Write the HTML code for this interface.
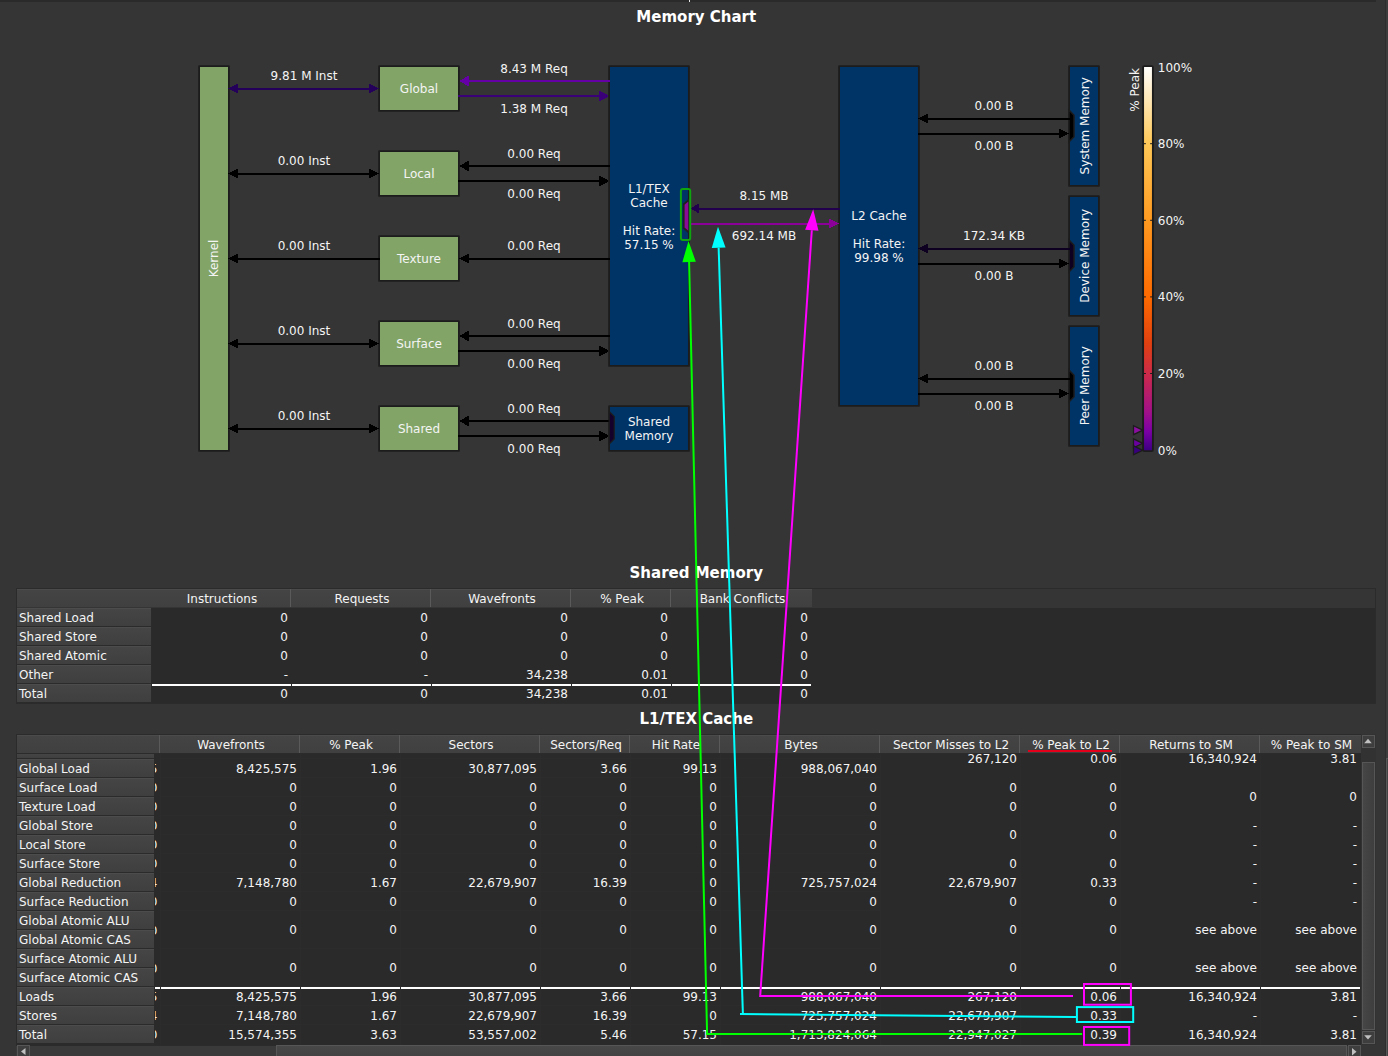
<!DOCTYPE html>
<html><head><meta charset="utf-8"><title>Memory Chart</title><style>
*{box-sizing:border-box;margin:0;padding:0}
html,body{width:1388px;height:1056px;overflow:hidden;background:#353535}
body{position:relative;font-family:"DejaVu Sans","Liberation Sans",sans-serif;font-size:12px;color:#f4f4f4;line-height:14px}
.a{position:absolute}
.t{position:absolute;white-space:nowrap;line-height:14px}
.title{position:absolute;left:0;width:1392.5px;text-align:center;font-weight:bold;font-size:15px;line-height:18px;color:#fff}
svg{position:absolute;left:0;top:0}
svg text{font-family:"DejaVu Sans","Liberation Sans",sans-serif;font-size:12px;fill:#f4f4f4}
.hd{position:absolute;height:18px;padding-left:2px;background:linear-gradient(#444444,#404040);border-top:1px solid #4b4b4b;text-align:center;line-height:16px;padding-top:1px;white-space:nowrap;overflow:hidden}
.hs{position:absolute;width:2px;background:linear-gradient(90deg,#5a5a5a 0,#5a5a5a 50%,#3a3a3a 50%)}
.rh{position:absolute;height:18px;background:linear-gradient(#454545,#3f3f3f);border-top:1px solid #4c4c4c;padding-left:2px;padding-top:1px;line-height:16px;white-space:nowrap;overflow:hidden}
.c{position:absolute;text-align:right;white-space:nowrap;line-height:14px;height:14px}
.body{position:absolute;background:#2a2a2a}
.wl{position:absolute;height:2px;background:#fff}
</style></head><body>
<div class="a" style="left:0;top:0;width:1376px;height:2px;background:#2a2a2a"></div>
<div class="a" style="left:689px;top:0;width:1px;height:2px;background:#e8e8e8"></div>
<div class="a" style="left:1385px;top:0;width:1px;height:1056px;background:#2e2e2e"></div>
<div class="a" style="left:1386px;top:0;width:2px;height:1056px;background:#3c3c3c"></div>
<div class="a" style="left:1386px;top:758px;width:2px;height:298px;background:#434343;border-left:1px solid #585858;border-top:1px solid #585858"></div>
<div class="title" style="top:8px">Memory Chart</div>
<div class="title" style="top:564px">Shared Memory</div>
<div class="title" style="top:710px">L1/TEX Cache</div>
<svg width="1388" height="1056" viewBox="0 0 1388 1056"><rect x="199.10" y="66.10" width="29.80" height="384.80" fill="#82a567" stroke="#1c1c1c" stroke-width="1.8" stroke-linejoin="round"/>
<rect x="379.10" y="66.10" width="79.80" height="44.80" fill="#82a567" stroke="#1c1c1c" stroke-width="1.8" stroke-linejoin="round"/>
<rect x="379.10" y="151.10" width="79.80" height="44.80" fill="#82a567" stroke="#1c1c1c" stroke-width="1.8" stroke-linejoin="round"/>
<rect x="379.10" y="236.10" width="79.80" height="44.80" fill="#82a567" stroke="#1c1c1c" stroke-width="1.8" stroke-linejoin="round"/>
<rect x="379.10" y="321.10" width="79.80" height="44.80" fill="#82a567" stroke="#1c1c1c" stroke-width="1.8" stroke-linejoin="round"/>
<rect x="379.10" y="406.10" width="79.80" height="44.80" fill="#82a567" stroke="#1c1c1c" stroke-width="1.8" stroke-linejoin="round"/>
<rect x="609.10" y="66.10" width="79.80" height="299.80" fill="#003366" stroke="#1c1c1c" stroke-width="1.8" stroke-linejoin="round"/>
<rect x="609.10" y="406.10" width="79.80" height="44.80" fill="#003366" stroke="#1c1c1c" stroke-width="1.8" stroke-linejoin="round"/>
<rect x="839.10" y="66.10" width="79.80" height="339.80" fill="#003366" stroke="#1c1c1c" stroke-width="1.8" stroke-linejoin="round"/>
<rect x="1069.10" y="66.10" width="29.80" height="119.80" fill="#003366" stroke="#1c1c1c" stroke-width="1.8" stroke-linejoin="round"/>
<rect x="1069.10" y="196.10" width="29.80" height="119.80" fill="#003366" stroke="#1c1c1c" stroke-width="1.8" stroke-linejoin="round"/>
<rect x="1069.10" y="326.10" width="29.80" height="119.80" fill="#003366" stroke="#1c1c1c" stroke-width="1.8" stroke-linejoin="round"/>
<g shape-rendering="crispEdges"><line x1="237.20" y1="89" x2="370.20" y2="89" stroke="#24005a" stroke-width="2"/>
<polygon points="228.20,88.5 238.20,83.6 238.20,93.4" fill="#24005a"/>
<polygon points="379.20,88.5 369.20,83.6 369.20,93.4" fill="#24005a"/>
</g>
<text x="304" y="80" text-anchor="middle" >9.81 M Inst</text>
<text x="419" y="93" text-anchor="middle" >Global</text>
<g shape-rendering="crispEdges"><line x1="237.20" y1="174" x2="370.20" y2="174" stroke="#000" stroke-width="2"/>
<polygon points="228.20,173.5 238.20,168.6 238.20,178.4" fill="#000"/>
<polygon points="379.20,173.5 369.20,168.6 369.20,178.4" fill="#000"/>
</g>
<text x="304" y="165" text-anchor="middle" >0.00 Inst</text>
<text x="419" y="178" text-anchor="middle" >Local</text>
<g shape-rendering="crispEdges"><line x1="237.20" y1="259" x2="380.00" y2="259" stroke="#000" stroke-width="2"/>
<polygon points="228.20,258.5 238.20,253.6 238.20,263.4" fill="#000"/>
</g>
<text x="304" y="250" text-anchor="middle" >0.00 Inst</text>
<text x="419" y="263" text-anchor="middle" >Texture</text>
<g shape-rendering="crispEdges"><line x1="237.20" y1="344" x2="370.20" y2="344" stroke="#000" stroke-width="2"/>
<polygon points="228.20,343.5 238.20,338.6 238.20,348.4" fill="#000"/>
<polygon points="379.20,343.5 369.20,338.6 369.20,348.4" fill="#000"/>
</g>
<text x="304" y="335" text-anchor="middle" >0.00 Inst</text>
<text x="419" y="348" text-anchor="middle" >Surface</text>
<g shape-rendering="crispEdges"><line x1="237.20" y1="429" x2="370.20" y2="429" stroke="#000" stroke-width="2"/>
<polygon points="228.20,428.5 238.20,423.6 238.20,433.4" fill="#000"/>
<polygon points="379.20,428.5 369.20,423.6 369.20,433.4" fill="#000"/>
</g>
<text x="304" y="420" text-anchor="middle" >0.00 Inst</text>
<text x="419" y="433" text-anchor="middle" >Shared</text>
<g shape-rendering="crispEdges"><line x1="468.00" y1="81.0" x2="610.00" y2="81.0" stroke="#6400a5" stroke-width="2"/>
<polygon points="459.00,81.0 469.00,75.6 469.00,86.4" fill="#6400a5"/>
</g>
<g shape-rendering="crispEdges"><line x1="458.00" y1="96.0" x2="600.40" y2="96.0" stroke="#3a0078" stroke-width="2"/>
<polygon points="609.40,96.0 599.40,90.6 599.40,101.4" fill="#3a0078"/>
</g>
<text x="534" y="73.0" text-anchor="middle" >8.43 M Req</text>
<text x="534" y="113.0" text-anchor="middle" >1.38 M Req</text>
<g shape-rendering="crispEdges"><line x1="468.00" y1="166.0" x2="610.00" y2="166.0" stroke="#000" stroke-width="2"/>
<polygon points="459.00,166.0 469.00,160.6 469.00,171.4" fill="#000"/>
</g>
<g shape-rendering="crispEdges"><line x1="458.00" y1="181.0" x2="600.40" y2="181.0" stroke="#000" stroke-width="2"/>
<polygon points="609.40,181.0 599.40,175.6 599.40,186.4" fill="#000"/>
</g>
<text x="534" y="158.0" text-anchor="middle" >0.00 Req</text>
<text x="534" y="198.0" text-anchor="middle" >0.00 Req</text>
<g shape-rendering="crispEdges"><line x1="468.00" y1="259.0" x2="610.00" y2="259.0" stroke="#000" stroke-width="2"/>
<polygon points="459.00,258.5 469.00,253.6 469.00,263.4" fill="#000"/>
</g>
<text x="534" y="250.0" text-anchor="middle" >0.00 Req</text>
<g shape-rendering="crispEdges"><line x1="468.00" y1="336.0" x2="610.00" y2="336.0" stroke="#000" stroke-width="2"/>
<polygon points="459.00,336.0 469.00,330.6 469.00,341.4" fill="#000"/>
</g>
<g shape-rendering="crispEdges"><line x1="458.00" y1="351.0" x2="600.40" y2="351.0" stroke="#000" stroke-width="2"/>
<polygon points="609.40,351.0 599.40,345.6 599.40,356.4" fill="#000"/>
</g>
<text x="534" y="328.0" text-anchor="middle" >0.00 Req</text>
<text x="534" y="368.0" text-anchor="middle" >0.00 Req</text>
<g shape-rendering="crispEdges"><line x1="468.00" y1="421.0" x2="610.00" y2="421.0" stroke="#000" stroke-width="2"/>
<polygon points="459.00,421.0 469.00,415.6 469.00,426.4" fill="#000"/>
</g>
<g shape-rendering="crispEdges"><line x1="458.00" y1="436.0" x2="600.40" y2="436.0" stroke="#000" stroke-width="2"/>
<polygon points="609.40,436.0 599.40,430.6 599.40,441.4" fill="#000"/>
</g>
<text x="534" y="413.0" text-anchor="middle" >0.00 Req</text>
<text x="534" y="453.0" text-anchor="middle" >0.00 Req</text>
<g shape-rendering="crispEdges"><line x1="698.00" y1="209" x2="839.50" y2="209" stroke="#22004d" stroke-width="2"/>
<polygon points="690.00,208.5 699.00,203.6 699.00,213.4" fill="#22004d"/>
</g>
<g shape-rendering="crispEdges"><line x1="689.50" y1="224" x2="830.00" y2="224" stroke="#8b0099" stroke-width="2"/>
<polygon points="839.00,223.5 829.00,218.6 829.00,228.4" fill="#8b0099"/>
</g>
<text x="764" y="200" text-anchor="middle" >8.15 MB</text>
<text x="764" y="240" text-anchor="middle" >692.14 MB</text>
<text x="994" y="109.9" text-anchor="middle" >0.00 B</text>
<text x="994" y="149.8" text-anchor="middle" >0.00 B</text>
<polygon points="1069,110.00 1074,115.20 1074,136.80 1069,142.00" fill="#000" stroke="#1c1c1c" stroke-width="1.5"/>
<g shape-rendering="crispEdges"><line x1="927.20" y1="119.0" x2="1070.00" y2="119.0" stroke="#000" stroke-width="2"/>
<polygon points="918.20,118.5 928.20,113.6 928.20,123.4" fill="#000"/>
</g>
<g shape-rendering="crispEdges"><line x1="918.00" y1="134.0" x2="1060.20" y2="134.0" stroke="#000" stroke-width="2"/>
<polygon points="1069.20,133.5 1059.20,128.6 1059.20,138.4" fill="#000"/>
</g>
<text x="994" y="239.9" text-anchor="middle" >172.34 KB</text>
<text x="994" y="279.8" text-anchor="middle" >0.00 B</text>
<polygon points="1069,240.00 1074,245.20 1074,266.80 1069,272.00" fill="#0e0020" stroke="#1c1c1c" stroke-width="1.5"/>
<g shape-rendering="crispEdges"><line x1="927.20" y1="249.0" x2="1070.00" y2="249.0" stroke="#0e0020" stroke-width="2"/>
<polygon points="918.20,248.5 928.20,243.6 928.20,253.4" fill="#0e0020"/>
</g>
<g shape-rendering="crispEdges"><line x1="918.00" y1="264.0" x2="1060.20" y2="264.0" stroke="#000" stroke-width="2"/>
<polygon points="1069.20,263.5 1059.20,258.6 1059.20,268.4" fill="#000"/>
</g>
<text x="994" y="369.9" text-anchor="middle" >0.00 B</text>
<text x="994" y="409.8" text-anchor="middle" >0.00 B</text>
<polygon points="1069,370.00 1074,375.20 1074,396.80 1069,402.00" fill="#000" stroke="#1c1c1c" stroke-width="1.5"/>
<g shape-rendering="crispEdges"><line x1="927.20" y1="379.0" x2="1070.00" y2="379.0" stroke="#000" stroke-width="2"/>
<polygon points="918.20,378.5 928.20,373.6 928.20,383.4" fill="#000"/>
</g>
<g shape-rendering="crispEdges"><line x1="918.00" y1="394.0" x2="1060.20" y2="394.0" stroke="#000" stroke-width="2"/>
<polygon points="1069.20,393.5 1059.20,388.6 1059.20,398.4" fill="#000"/>
</g>
<polygon points="609.2,411.5 614.2,416.5 614.2,439 609.2,444" fill="#14002b" stroke="#1c1c1c" stroke-width="1.2"/>
<polygon points="689.2,199.6 683.7,204.2 683.7,228 689.2,232.8" fill="#8b0a96" stroke="#202020" stroke-width="1.8"/>
<rect x="680.9" y="188.9" width="9.3" height="51" rx="2" ry="2" fill="none" stroke="#0ea50e" stroke-width="2"/>
<text transform="translate(217.8,258.5) rotate(-90)" text-anchor="middle">Kernel</text>
<text x="649" y="193" text-anchor="middle" >L1/TEX</text>
<text x="649" y="207" text-anchor="middle" >Cache</text>
<text x="649" y="235" text-anchor="middle" >Hit Rate:</text>
<text x="649" y="249" text-anchor="middle" >57.15 %</text>
<text x="649" y="426" text-anchor="middle" >Shared</text>
<text x="649" y="440" text-anchor="middle" >Memory</text>
<text x="879" y="220" text-anchor="middle" >L2 Cache</text>
<text x="879" y="248" text-anchor="middle" >Hit Rate:</text>
<text x="879" y="262" text-anchor="middle" >99.98 %</text>
<text transform="translate(1088.8,125.8) rotate(-90)" text-anchor="middle">System Memory</text>
<text transform="translate(1088.8,255.8) rotate(-90)" text-anchor="middle">Device Memory</text>
<text transform="translate(1088.8,385.8) rotate(-90)" text-anchor="middle">Peer Memory</text>
<defs><linearGradient id="cb" x1="0" y1="1" x2="0" y2="0">
<stop offset="0" stop-color="#3a0082"/><stop offset="0.05" stop-color="#7a00a5"/><stop offset="0.1" stop-color="#a0108a"/>
<stop offset="0.2" stop-color="#cc2a4a"/><stop offset="0.28" stop-color="#e04010"/><stop offset="0.4" stop-color="#ff6a00"/>
<stop offset="0.6" stop-color="#ff9a20"/><stop offset="0.8" stop-color="#ffc857"/><stop offset="1" stop-color="#ffffff"/></linearGradient></defs>
<rect x="1143.1" y="66.1" width="9.8" height="385" rx="1.2" fill="url(#cb)" stroke="#1c1c1c" stroke-width="1.9"/>
<text x="1157.8" y="72" text-anchor="start" >100%</text>
<text x="1157.8" y="148" text-anchor="start" >80%</text>
<path d="M1143.9 143.7h2M1152.1 143.7h-2" stroke="#1c1c1c" stroke-width="1"/>
<text x="1157.8" y="225" text-anchor="start" >60%</text>
<path d="M1143.9 220.3h2M1152.1 220.3h-2" stroke="#1c1c1c" stroke-width="1"/>
<text x="1157.8" y="301" text-anchor="start" >40%</text>
<path d="M1143.9 296.9h2M1152.1 296.9h-2" stroke="#1c1c1c" stroke-width="1"/>
<text x="1157.8" y="378" text-anchor="start" >20%</text>
<path d="M1143.9 373.5h2M1152.1 373.5h-2" stroke="#1c1c1c" stroke-width="1"/>
<text x="1157.8" y="455" text-anchor="start" >0%</text>
<text transform="translate(1138.5,89.8) rotate(-90)" text-anchor="middle">% Peak</text>
<polygon points="1142.8,430.2 1133.5,425.7 1133.5,434.7" fill="#8b0f9f" stroke="#1c1c1c" stroke-width="1.3"/>
<polygon points="1142.8,443.3 1133.5,438.8 1133.5,447.8" fill="#6a00a0" stroke="#1c1c1c" stroke-width="1.3"/>
<polygon points="1142.8,450.3 1133.5,445.8 1133.5,454.8" fill="#38007a" stroke="#1c1c1c" stroke-width="1.3"/></svg>
<div class="a" style="left:16px;top:588px;width:1360px;height:116px;background:#2b2b2b"></div>
<div class="a" style="left:17px;top:589px;width:1358px;height:19px;background:#353535"></div>
<div class="body" style="left:152px;top:608px;width:1223px;height:95px"></div>
<div class="hd" style="left:17px;top:589px;width:274px"><span style="padding-left:134px">Instructions</span></div>
<div class="hs" style="left:290px;top:589px;height:18px"></div>
<div class="hd" style="left:291px;top:589px;width:140px">Requests</div>
<div class="hs" style="left:430px;top:589px;height:18px"></div>
<div class="hd" style="left:431px;top:589px;width:140px">Wavefronts</div>
<div class="hs" style="left:570px;top:589px;height:18px"></div>
<div class="hd" style="left:571px;top:589px;width:100px">% Peak</div>
<div class="hs" style="left:670px;top:589px;height:18px"></div>
<div class="hd" style="left:671px;top:589px;width:141px">Bank Conflicts</div>
<div class="rh" style="left:17px;top:608px;width:134px">Shared Load</div>
<div class="c" style="left:152px;top:611px;width:136px">0</div>
<div class="c" style="left:291px;top:611px;width:137px">0</div>
<div class="c" style="left:431px;top:611px;width:137px">0</div>
<div class="c" style="left:571px;top:611px;width:97px">0</div>
<div class="c" style="left:671px;top:611px;width:137px">0</div>
<div class="rh" style="left:17px;top:627px;width:134px">Shared Store</div>
<div class="c" style="left:152px;top:630px;width:136px">0</div>
<div class="c" style="left:291px;top:630px;width:137px">0</div>
<div class="c" style="left:431px;top:630px;width:137px">0</div>
<div class="c" style="left:571px;top:630px;width:97px">0</div>
<div class="c" style="left:671px;top:630px;width:137px">0</div>
<div class="rh" style="left:17px;top:646px;width:134px">Shared Atomic</div>
<div class="c" style="left:152px;top:649px;width:136px">0</div>
<div class="c" style="left:291px;top:649px;width:137px">0</div>
<div class="c" style="left:431px;top:649px;width:137px">0</div>
<div class="c" style="left:571px;top:649px;width:97px">0</div>
<div class="c" style="left:671px;top:649px;width:137px">0</div>
<div class="rh" style="left:17px;top:665px;width:134px">Other</div>
<div class="c" style="left:152px;top:668px;width:136px">-</div>
<div class="c" style="left:291px;top:668px;width:137px">-</div>
<div class="c" style="left:431px;top:668px;width:137px">34,238</div>
<div class="c" style="left:571px;top:668px;width:97px">0.01</div>
<div class="c" style="left:671px;top:668px;width:137px">0</div>
<div class="rh" style="left:17px;top:684px;width:134px">Total</div>
<div class="c" style="left:152px;top:687px;width:136px">0</div>
<div class="c" style="left:291px;top:687px;width:137px">0</div>
<div class="c" style="left:431px;top:687px;width:137px">34,238</div>
<div class="c" style="left:571px;top:687px;width:97px">0.01</div>
<div class="c" style="left:671px;top:687px;width:137px">0</div>
<div class="wl" style="left:152px;top:684px;width:139px"></div>
<div class="wl" style="left:292px;top:684px;width:139px"></div>
<div class="wl" style="left:432px;top:684px;width:139px"></div>
<div class="wl" style="left:572px;top:684px;width:99px"></div>
<div class="wl" style="left:672px;top:684px;width:139px"></div>
<div class="a" style="left:16px;top:734px;width:1360px;height:322px;background:#2b2b2b"></div>
<div class="body" style="left:154px;top:754px;width:1207px;height:291px"></div>
<div class="hd" style="left:17px;top:735px;width:143px"></div>
<div class="hs" style="left:159px;top:735px;height:18px"></div>
<div class="hd" style="left:160px;top:735px;width:140px">Wavefronts</div>
<div class="hs" style="left:299px;top:735px;height:18px"></div>
<div class="hd" style="left:300px;top:735px;width:100px">% Peak</div>
<div class="hs" style="left:399px;top:735px;height:18px"></div>
<div class="hd" style="left:400px;top:735px;width:140px">Sectors</div>
<div class="hs" style="left:539px;top:735px;height:18px"></div>
<div class="hd" style="left:540px;top:735px;width:90px">Sectors/Req</div>
<div class="hs" style="left:629px;top:735px;height:18px"></div>
<div class="hd" style="left:630px;top:735px;width:90px">Hit Rate</div>
<div class="hs" style="left:719px;top:735px;height:18px"></div>
<div class="hd" style="left:720px;top:735px;width:160px">Bytes</div>
<div class="hs" style="left:879px;top:735px;height:18px"></div>
<div class="hd" style="left:880px;top:735px;width:140px">Sector Misses to L2</div>
<div class="hs" style="left:1019px;top:735px;height:18px"></div>
<div class="hd" style="left:1020px;top:735px;width:100px">% Peak to L2</div>
<div class="hs" style="left:1119px;top:735px;height:18px"></div>
<div class="hd" style="left:1120px;top:735px;width:140px">Returns to SM</div>
<div class="hs" style="left:1259px;top:735px;height:18px"></div>
<div class="hd" style="left:1260px;top:735px;width:101px">% Peak to SM</div>
<div class="a" style="left:1028px;top:750px;width:84px;height:2px;background:#e4001a"></div>
<div class="a" style="left:160px;top:754px;width:1px;height:291px;background:#2c2c2c"></div>
<div class="a" style="left:300px;top:754px;width:1px;height:291px;background:#2c2c2c"></div>
<div class="a" style="left:400px;top:754px;width:1px;height:291px;background:#2c2c2c"></div>
<div class="a" style="left:540px;top:754px;width:1px;height:291px;background:#2c2c2c"></div>
<div class="a" style="left:630px;top:754px;width:1px;height:291px;background:#2c2c2c"></div>
<div class="a" style="left:720px;top:754px;width:1px;height:291px;background:#2c2c2c"></div>
<div class="a" style="left:880px;top:754px;width:1px;height:291px;background:#2c2c2c"></div>
<div class="a" style="left:1020px;top:754px;width:1px;height:291px;background:#2c2c2c"></div>
<div class="a" style="left:1120px;top:754px;width:1px;height:291px;background:#2c2c2c"></div>
<div class="a" style="left:1260px;top:754px;width:1px;height:291px;background:#2c2c2c"></div>
<div class="a" style="left:161px;top:758px;width:719px;height:1px;background:#2c2c2c"></div>
<div class="a" style="left:161px;top:777px;width:719px;height:1px;background:#2c2c2c"></div>
<div class="a" style="left:161px;top:796px;width:719px;height:1px;background:#2c2c2c"></div>
<div class="a" style="left:161px;top:815px;width:719px;height:1px;background:#2c2c2c"></div>
<div class="a" style="left:161px;top:834px;width:719px;height:1px;background:#2c2c2c"></div>
<div class="a" style="left:161px;top:853px;width:719px;height:1px;background:#2c2c2c"></div>
<div class="a" style="left:161px;top:872px;width:719px;height:1px;background:#2c2c2c"></div>
<div class="a" style="left:161px;top:891px;width:719px;height:1px;background:#2c2c2c"></div>
<div class="a" style="left:161px;top:910px;width:719px;height:1px;background:#2c2c2c"></div>
<div class="a" style="left:161px;top:948px;width:719px;height:1px;background:#2c2c2c"></div>
<div class="a" style="left:161px;top:986px;width:719px;height:1px;background:#2c2c2c"></div>
<div class="a" style="left:161px;top:1005px;width:719px;height:1px;background:#2c2c2c"></div>
<div class="a" style="left:161px;top:1024px;width:719px;height:1px;background:#2c2c2c"></div>
<div class="rh" style="left:17px;top:754px;width:137px;height:4px;border-top:0"></div>
<div class="rh" style="left:17px;top:759px;width:137px">Global Load</div>
<div class="rh" style="left:17px;top:778px;width:137px">Surface Load</div>
<div class="rh" style="left:17px;top:797px;width:137px">Texture Load</div>
<div class="rh" style="left:17px;top:816px;width:137px">Global Store</div>
<div class="rh" style="left:17px;top:835px;width:137px">Local Store</div>
<div class="rh" style="left:17px;top:854px;width:137px">Surface Store</div>
<div class="rh" style="left:17px;top:873px;width:137px">Global Reduction</div>
<div class="rh" style="left:17px;top:892px;width:137px">Surface Reduction</div>
<div class="rh" style="left:17px;top:911px;width:137px">Global Atomic ALU</div>
<div class="rh" style="left:17px;top:930px;width:137px">Global Atomic CAS</div>
<div class="rh" style="left:17px;top:949px;width:137px">Surface Atomic ALU</div>
<div class="rh" style="left:17px;top:968px;width:137px">Surface Atomic CAS</div>
<div class="rh" style="left:17px;top:987px;width:137px">Loads</div>
<div class="rh" style="left:17px;top:1006px;width:137px">Stores</div>
<div class="rh" style="left:17px;top:1025px;width:137px">Total</div>
<div class="c" style="left:160px;top:762px;width:137px">8,425,575</div>
<div class="c" style="left:160px;top:781px;width:137px">0</div>
<div class="c" style="left:160px;top:800px;width:137px">0</div>
<div class="c" style="left:160px;top:819px;width:137px">0</div>
<div class="c" style="left:160px;top:838px;width:137px">0</div>
<div class="c" style="left:160px;top:857px;width:137px">0</div>
<div class="c" style="left:160px;top:876px;width:137px">7,148,780</div>
<div class="c" style="left:160px;top:895px;width:137px">0</div>
<div class="c" style="left:160px;top:923px;width:137px">0</div>
<div class="c" style="left:160px;top:961px;width:137px">0</div>
<div class="c" style="left:160px;top:990px;width:137px">8,425,575</div>
<div class="c" style="left:160px;top:1009px;width:137px">7,148,780</div>
<div class="c" style="left:160px;top:1028px;width:137px">15,574,355</div>
<div class="c" style="left:300px;top:762px;width:97px">1.96</div>
<div class="c" style="left:300px;top:781px;width:97px">0</div>
<div class="c" style="left:300px;top:800px;width:97px">0</div>
<div class="c" style="left:300px;top:819px;width:97px">0</div>
<div class="c" style="left:300px;top:838px;width:97px">0</div>
<div class="c" style="left:300px;top:857px;width:97px">0</div>
<div class="c" style="left:300px;top:876px;width:97px">1.67</div>
<div class="c" style="left:300px;top:895px;width:97px">0</div>
<div class="c" style="left:300px;top:923px;width:97px">0</div>
<div class="c" style="left:300px;top:961px;width:97px">0</div>
<div class="c" style="left:300px;top:990px;width:97px">1.96</div>
<div class="c" style="left:300px;top:1009px;width:97px">1.67</div>
<div class="c" style="left:300px;top:1028px;width:97px">3.63</div>
<div class="c" style="left:400px;top:762px;width:137px">30,877,095</div>
<div class="c" style="left:400px;top:781px;width:137px">0</div>
<div class="c" style="left:400px;top:800px;width:137px">0</div>
<div class="c" style="left:400px;top:819px;width:137px">0</div>
<div class="c" style="left:400px;top:838px;width:137px">0</div>
<div class="c" style="left:400px;top:857px;width:137px">0</div>
<div class="c" style="left:400px;top:876px;width:137px">22,679,907</div>
<div class="c" style="left:400px;top:895px;width:137px">0</div>
<div class="c" style="left:400px;top:923px;width:137px">0</div>
<div class="c" style="left:400px;top:961px;width:137px">0</div>
<div class="c" style="left:400px;top:990px;width:137px">30,877,095</div>
<div class="c" style="left:400px;top:1009px;width:137px">22,679,907</div>
<div class="c" style="left:400px;top:1028px;width:137px">53,557,002</div>
<div class="c" style="left:540px;top:762px;width:87px">3.66</div>
<div class="c" style="left:540px;top:781px;width:87px">0</div>
<div class="c" style="left:540px;top:800px;width:87px">0</div>
<div class="c" style="left:540px;top:819px;width:87px">0</div>
<div class="c" style="left:540px;top:838px;width:87px">0</div>
<div class="c" style="left:540px;top:857px;width:87px">0</div>
<div class="c" style="left:540px;top:876px;width:87px">16.39</div>
<div class="c" style="left:540px;top:895px;width:87px">0</div>
<div class="c" style="left:540px;top:923px;width:87px">0</div>
<div class="c" style="left:540px;top:961px;width:87px">0</div>
<div class="c" style="left:540px;top:990px;width:87px">3.66</div>
<div class="c" style="left:540px;top:1009px;width:87px">16.39</div>
<div class="c" style="left:540px;top:1028px;width:87px">5.46</div>
<div class="c" style="left:630px;top:762px;width:87px">99.13</div>
<div class="c" style="left:630px;top:781px;width:87px">0</div>
<div class="c" style="left:630px;top:800px;width:87px">0</div>
<div class="c" style="left:630px;top:819px;width:87px">0</div>
<div class="c" style="left:630px;top:838px;width:87px">0</div>
<div class="c" style="left:630px;top:857px;width:87px">0</div>
<div class="c" style="left:630px;top:876px;width:87px">0</div>
<div class="c" style="left:630px;top:895px;width:87px">0</div>
<div class="c" style="left:630px;top:923px;width:87px">0</div>
<div class="c" style="left:630px;top:961px;width:87px">0</div>
<div class="c" style="left:630px;top:990px;width:87px">99.13</div>
<div class="c" style="left:630px;top:1009px;width:87px">0</div>
<div class="c" style="left:630px;top:1028px;width:87px">57.15</div>
<div class="c" style="left:720px;top:762px;width:157px">988,067,040</div>
<div class="c" style="left:720px;top:781px;width:157px">0</div>
<div class="c" style="left:720px;top:800px;width:157px">0</div>
<div class="c" style="left:720px;top:819px;width:157px">0</div>
<div class="c" style="left:720px;top:838px;width:157px">0</div>
<div class="c" style="left:720px;top:857px;width:157px">0</div>
<div class="c" style="left:720px;top:876px;width:157px">725,757,024</div>
<div class="c" style="left:720px;top:895px;width:157px">0</div>
<div class="c" style="left:720px;top:923px;width:157px">0</div>
<div class="c" style="left:720px;top:961px;width:157px">0</div>
<div class="c" style="left:720px;top:990px;width:157px">988,067,040</div>
<div class="c" style="left:720px;top:1009px;width:157px">725,757,024</div>
<div class="c" style="left:720px;top:1028px;width:157px">1,713,824,064</div>
<div class="c" style="left:880px;top:752px;width:137px">267,120</div>
<div class="c" style="left:1020px;top:752px;width:97px">0.06</div>
<div class="c" style="left:880px;top:781px;width:137px">0</div>
<div class="c" style="left:1020px;top:781px;width:97px">0</div>
<div class="c" style="left:880px;top:800px;width:137px">0</div>
<div class="c" style="left:1020px;top:800px;width:97px">0</div>
<div class="c" style="left:880px;top:828px;width:137px">0</div>
<div class="c" style="left:1020px;top:828px;width:97px">0</div>
<div class="c" style="left:880px;top:857px;width:137px">0</div>
<div class="c" style="left:1020px;top:857px;width:97px">0</div>
<div class="c" style="left:880px;top:876px;width:137px">22,679,907</div>
<div class="c" style="left:1020px;top:876px;width:97px">0.33</div>
<div class="c" style="left:880px;top:895px;width:137px">0</div>
<div class="c" style="left:1020px;top:895px;width:97px">0</div>
<div class="c" style="left:880px;top:923px;width:137px">0</div>
<div class="c" style="left:1020px;top:923px;width:97px">0</div>
<div class="c" style="left:880px;top:961px;width:137px">0</div>
<div class="c" style="left:1020px;top:961px;width:97px">0</div>
<div class="c" style="left:880px;top:990px;width:137px">267,120</div>
<div class="c" style="left:1020px;top:990px;width:97px">0.06</div>
<div class="c" style="left:880px;top:1009px;width:137px">22,679,907</div>
<div class="c" style="left:1020px;top:1009px;width:97px">0.33</div>
<div class="c" style="left:880px;top:1028px;width:137px">22,947,027</div>
<div class="c" style="left:1020px;top:1028px;width:97px">0.39</div>
<div class="c" style="left:1120px;top:752px;width:137px">16,340,924</div>
<div class="c" style="left:1260px;top:752px;width:97px">3.81</div>
<div class="c" style="left:1120px;top:790px;width:137px">0</div>
<div class="c" style="left:1260px;top:790px;width:97px">0</div>
<div class="c" style="left:1120px;top:819px;width:137px">-</div>
<div class="c" style="left:1260px;top:819px;width:97px">-</div>
<div class="c" style="left:1120px;top:838px;width:137px">-</div>
<div class="c" style="left:1260px;top:838px;width:97px">-</div>
<div class="c" style="left:1120px;top:857px;width:137px">-</div>
<div class="c" style="left:1260px;top:857px;width:97px">-</div>
<div class="c" style="left:1120px;top:876px;width:137px">-</div>
<div class="c" style="left:1260px;top:876px;width:97px">-</div>
<div class="c" style="left:1120px;top:895px;width:137px">-</div>
<div class="c" style="left:1260px;top:895px;width:97px">-</div>
<div class="c" style="left:1120px;top:923px;width:137px">see above</div>
<div class="c" style="left:1260px;top:923px;width:97px">see above</div>
<div class="c" style="left:1120px;top:961px;width:137px">see above</div>
<div class="c" style="left:1260px;top:961px;width:97px">see above</div>
<div class="c" style="left:1120px;top:990px;width:137px">16,340,924</div>
<div class="c" style="left:1260px;top:990px;width:97px">3.81</div>
<div class="c" style="left:1120px;top:1009px;width:137px">-</div>
<div class="c" style="left:1260px;top:1009px;width:97px">-</div>
<div class="c" style="left:1120px;top:1028px;width:137px">16,340,924</div>
<div class="c" style="left:1260px;top:1028px;width:97px">3.81</div>
<div class="a" style="left:155px;top:762.0px;width:2.5px;height:14px;overflow:hidden"><span class="a" style="right:0;top:0;line-height:14px">5</span></div>
<div class="a" style="left:155px;top:781.0px;width:2.5px;height:14px;overflow:hidden"><span class="a" style="right:0;top:0;line-height:14px">0</span></div>
<div class="a" style="left:155px;top:800.0px;width:2.5px;height:14px;overflow:hidden"><span class="a" style="right:0;top:0;line-height:14px">0</span></div>
<div class="a" style="left:155px;top:819.0px;width:2.5px;height:14px;overflow:hidden"><span class="a" style="right:0;top:0;line-height:14px">0</span></div>
<div class="a" style="left:155px;top:838.0px;width:2.5px;height:14px;overflow:hidden"><span class="a" style="right:0;top:0;line-height:14px">0</span></div>
<div class="a" style="left:155px;top:857.0px;width:2.5px;height:14px;overflow:hidden"><span class="a" style="right:0;top:0;line-height:14px">0</span></div>
<div class="a" style="left:155px;top:876.0px;width:2.5px;height:14px;overflow:hidden"><span class="a" style="right:0;top:0;line-height:14px">4</span></div>
<div class="a" style="left:155px;top:895.0px;width:2.5px;height:14px;overflow:hidden"><span class="a" style="right:0;top:0;line-height:14px">0</span></div>
<div class="a" style="left:155px;top:923.5px;width:2.5px;height:14px;overflow:hidden"><span class="a" style="right:0;top:0;line-height:14px">0</span></div>
<div class="a" style="left:155px;top:961.5px;width:2.5px;height:14px;overflow:hidden"><span class="a" style="right:0;top:0;line-height:14px">0</span></div>
<div class="a" style="left:155px;top:990.0px;width:2.5px;height:14px;overflow:hidden"><span class="a" style="right:0;top:0;line-height:14px">5</span></div>
<div class="a" style="left:155px;top:1009.0px;width:2.5px;height:14px;overflow:hidden"><span class="a" style="right:0;top:0;line-height:14px">4</span></div>
<div class="a" style="left:155px;top:1028.0px;width:2.5px;height:14px;overflow:hidden"><span class="a" style="right:0;top:0;line-height:14px">0</span></div>
<div class="wl" style="left:155px;top:987px;width:5px"></div>
<div class="wl" style="left:161px;top:987px;width:139px"></div>
<div class="wl" style="left:301px;top:987px;width:99px"></div>
<div class="wl" style="left:401px;top:987px;width:139px"></div>
<div class="wl" style="left:541px;top:987px;width:89px"></div>
<div class="wl" style="left:631px;top:987px;width:89px"></div>
<div class="wl" style="left:721px;top:987px;width:159px"></div>
<div class="wl" style="left:881px;top:987px;width:139px"></div>
<div class="wl" style="left:1021px;top:987px;width:99px"></div>
<div class="wl" style="left:1121px;top:987px;width:139px"></div>
<div class="wl" style="left:1261px;top:987px;width:99px"></div>
<div class="a" style="left:1361px;top:734px;width:15px;height:311px;background:#323232"></div>
<div class="a" style="left:1362px;top:735px;width:13px;height:13px;background:#3e3e3e;border:1px solid #565656"></div>
<div class="a" style="left:1362px;top:1031px;width:13px;height:13px;background:#3e3e3e;border:1px solid #565656"></div>
<div class="a" style="left:1362px;top:762px;width:13px;height:268px;background:linear-gradient(90deg,#464646,#3e3e3e);border:1px solid #565656"></div>
<div class="a" style="left:16px;top:1045px;width:1345px;height:11px;background:#3a3a3a;border-top:1px solid #2b2b2b"></div>
<div class="a" style="left:17px;top:1045px;width:13px;height:13px;background:#3e3e3e;border:1px solid #565656"></div>
<div class="a" style="left:1348px;top:1045px;width:13px;height:13px;background:#3e3e3e;border:1px solid #565656"></div>
<div class="a" style="left:276px;top:1045px;width:1071px;height:13px;background:linear-gradient(#484848,#424242);border:1px solid #565656"></div>
<div class="a" style="left:1361px;top:1045px;width:15px;height:11px;background:#353535"></div>
<svg width="1388" height="1056" viewBox="0 0 1388 1056"><polygon points="1364.2,743.2 1371.8,743.2 1368,738.8" fill="#c0c0c0"/><polygon points="1364.2,1035.2 1371.8,1035.2 1368,1039.6" fill="#c0c0c0"/><polygon points="25.5,1048 25.5,1055 21,1051.5" fill="#c0c0c0"/><polygon points="1352,1048 1352,1055.5 1356.5,1051.7" fill="#c0c0c0"/></svg>
<svg width="1388" height="1056" viewBox="0 0 1388 1056"><polygon points="688.50,241.00 695.85,261.81 682.35,262.19" fill="#00ff00"/>
<path d="M689.10 262.00 L707.10 1034.00 L1082.10 1034.00" fill="none" stroke="#00ff00" stroke-width="2" stroke-linejoin="miter"/>
<polygon points="718.00,226.70 725.55,247.59 711.75,248.01" fill="#00ffff"/>
<path d="M718.65 247.80 L742.90 1014.50" fill="none" stroke="#00ffff" stroke-width="2" stroke-linejoin="miter"/>
<path d="M740 1014 L1076 1017.1" stroke="#00ffff" stroke-width="2" fill="none"/>
<polygon points="813.20,209.20 818.49,230.74 805.11,229.86" fill="#ff00ff"/>
<path d="M811.80 230.30 L760.20 995.90 L1073.00 995.90" fill="none" stroke="#ff00ff" stroke-width="2" stroke-linejoin="miter"/>
<rect x="1084" y="984" width="46.9" height="20.7" fill="none" stroke="#ff00ff" stroke-width="2"/>
<rect x="1084" y="1027" width="45.2" height="17.9" fill="none" stroke="#ff00ff" stroke-width="2"/>
<rect x="1076.9" y="1007.1" width="56.3" height="14.9" fill="none" stroke="#00ffff" stroke-width="2"/></svg>
</body></html>
